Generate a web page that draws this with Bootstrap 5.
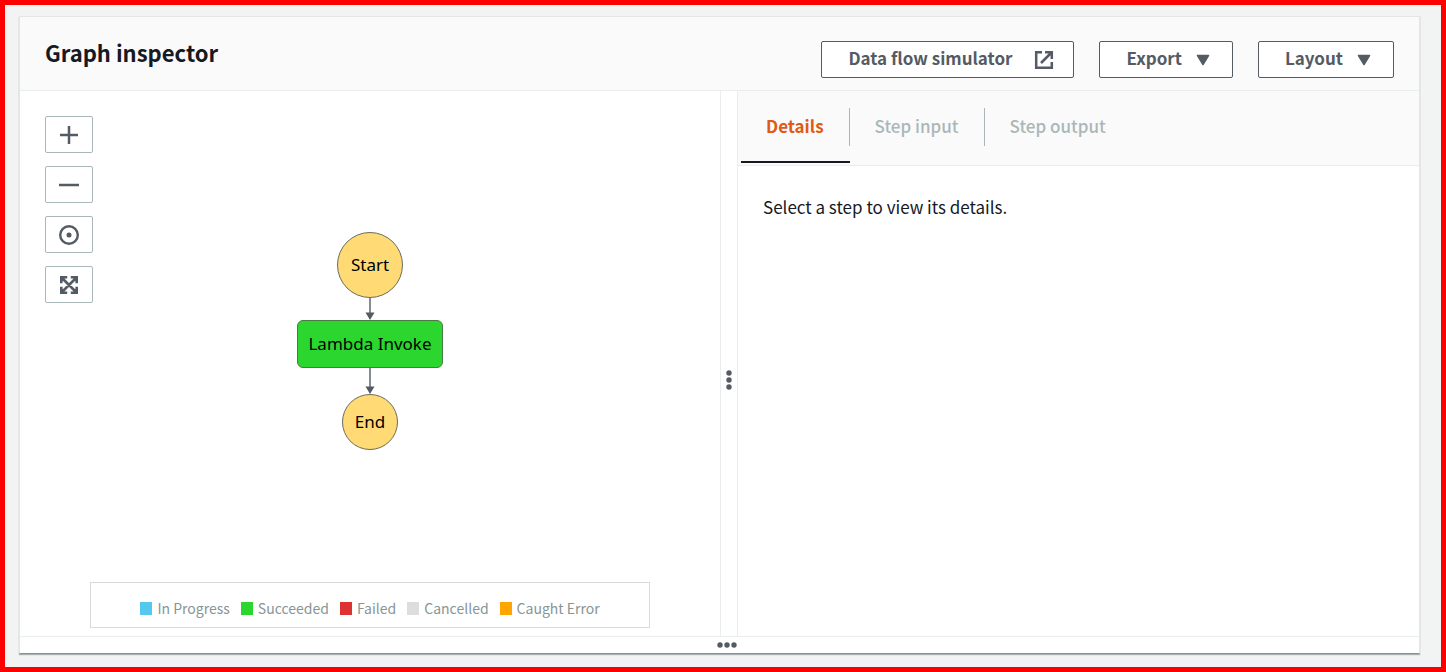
<!DOCTYPE html>
<html lang="en">
<head>
<meta charset="utf-8">
<meta name="viewport" content="width=device-width, initial-scale=1">
<title>Graph inspector</title>
<link href="https://cdn.jsdelivr.net/npm/bootstrap@5.3.0/dist/css/bootstrap.min.css" rel="stylesheet">
<style>
  body { font-family: "Noto Sans CJK JP", "Noto Sans", sans-serif; font-size: 17px; line-height: 24px; color: #16191f; background: #f2f3f3; }
  .page-frame { border: 5px solid #f00; padding: 11px 21px 13px 14px; }
  .inspector { background: #fff; border: 1px solid #e4e6e6; border-bottom: 1px solid #879196; box-shadow: 0 1px 1px rgba(0,28,36,.3); }
  .inspector-head { background: #fafafa; border-bottom: 1px solid #eaeded; padding: 24px 25px 12px; }
  .inspector-head h1 { font-size: 22px; line-height: 22px; font-weight: 700; }
  .head-actions { gap: 25px; }
  .btn-tool { --bs-btn-color: #545b64; --bs-btn-bg: #fff; --bs-btn-border-color: #545b64; --bs-btn-border-radius: 2px; --bs-btn-font-size: 17px; --bs-btn-font-weight: 700; --bs-btn-line-height: 22px; --bs-btn-hover-color: #16191f; --bs-btn-hover-bg: #fafafa; --bs-btn-hover-border-color: #16191f; height: 37px; padding: 0 22px 0 26px; display: flex; align-items: center; gap: 14px; }
  .btn-tool span { padding-bottom: 3px; }
  .btn-external { padding-right: 19px; gap: 22px; }
  .btn-zoom { --bs-btn-border-color: #aab7b8; width: 48px; padding: 0; justify-content: center; }
  .graph-pane { flex: 700 1 0; }
  .detail-pane { flex: 681 1 0; }
  .zoom-tools { top: 25px; left: 25px; gap: 13px; }
  .graph-area { padding-top: 8px; }
  .node { font-family: "Noto Sans", sans-serif; font-size: 17px; color: #000; border: 1px solid #6b6b5c; background: #ffda75; display: flex; align-items: center; justify-content: center; }
  .node-start { width: 66px; height: 66px; border-radius: 50%; }
  .node-end { width: 56px; height: 56px; border-radius: 50%; }
  .node-task { width: 146px; height: 48px; border-radius: 6px; background: #2bd62e; border-color: #4a7a44; }
  .legend-box { width: 80%; border: 1px solid #d9dbdb; margin-bottom: 8px; padding: 13px 0 7px; gap: 11px; font-size: 14px; color: #879596; }
  .legend-item { gap: 5px; }
  .swatch { width: 12px; height: 13px; }
  .s-progress { background: #53c9ed; } .s-ok { background: #2bd62e; } .s-fail { background: #de3232; } .s-cancel { background: #ddd; } .s-caught { background: orange; }
  .splitter { width: 18px; border: solid #eaeded; border-width: 0 1px; padding-top: 32px; }
  .grip-row { height: 17px; border-top: 1px solid #eaeded; padding-left: 15px; }
  .tab-strip { background: #fafafa; border-bottom: 1px solid #eaeded; padding: 17px 3px 2px; height: 75px; }
  .tab-strip .nav-link { border: 0; border-radius: 0; padding: 0 25px; height: 38px; line-height: 36px; color: #aab7b8; font-weight: 500; border-right: 1px solid #aab7b8; }
  .tab-strip .nav-item:last-child .nav-link { border-right: 0; }
  .tab-strip .nav-item { border-bottom: 2px solid transparent; }
  .tab-strip .nav-item.current { border-bottom-color: #16191f; }
  .tab-strip .nav-link.active { color: #df5b15; font-weight: 700; }
  .details-text { padding: 29px 25px; }
</style>
</head>
<body>
<div class="page-frame min-vh-100 d-flex">
  <main class="inspector flex-fill d-flex flex-column">
    <header class="inspector-head d-flex justify-content-between align-items-start">
      <h1 class="m-0">Graph inspector</h1>
      <div class="head-actions d-flex">
        <button type="button" class="btn btn-tool btn-external"><span>Data flow simulator</span>
          <svg width="20" height="20" viewBox="0 0 20 20" fill="none" stroke="currentColor" stroke-width="2.500" aria-hidden="true"><path d="M8 2.200H2.200v15.600h15.600V12M11 2.200h6.800V9M17.500 2.500 7 13"/></svg>
        </button>
        <button type="button" class="btn btn-tool"><span>Export</span>
          <svg width="14" height="12" viewBox="0 0 14 12" aria-hidden="true"><path d="M1.500 1.500h11L7 10.500z" fill="currentColor" stroke="currentColor" stroke-width="1.500" stroke-linejoin="round"/></svg>
        </button>
        <button type="button" class="btn btn-tool"><span>Layout</span>
          <svg width="14" height="12" viewBox="0 0 14 12" aria-hidden="true"><path d="M1.500 1.500h11L7 10.500z" fill="currentColor" stroke="currentColor" stroke-width="1.500" stroke-linejoin="round"/></svg>
        </button>
      </div>
    </header>
    <div class="d-flex flex-fill">
      <section class="graph-pane position-relative d-flex flex-column align-items-center" aria-label="Graph">
        <div class="zoom-tools position-absolute d-flex flex-column">
          <button type="button" class="btn btn-tool btn-zoom" aria-label="Zoom in"><svg width="20" height="20" viewBox="0 0 20 20" stroke="currentColor" stroke-width="2.500"><path d="M1 10h18M10 1v18"/></svg></button>
          <button type="button" class="btn btn-tool btn-zoom" aria-label="Zoom out"><svg width="20" height="20" viewBox="0 0 20 20" stroke="currentColor" stroke-width="2.500"><path d="M0 10h20"/></svg></button>
          <button type="button" class="btn btn-tool btn-zoom" aria-label="Center"><svg width="20" height="20" viewBox="0 0 20 20" fill="none" stroke="currentColor" stroke-width="2.400"><circle cx="10" cy="10" r="8.800"/><circle cx="10" cy="10" r="2.500" fill="currentColor" stroke="none"/></svg></button>
          <button type="button" class="btn btn-tool btn-zoom" aria-label="Fit to view"><svg width="20" height="20" viewBox="0 0 20 20" fill="none" stroke="currentColor" stroke-width="2.600"><path d="M2.300 8.200V2.300h5.900M11.800 2.300h5.900v5.900M17.700 11.800v5.900h-5.900M8.200 17.700H2.300v-5.900M2.500 2.500l15 15M17.500 2.500l-15 15"/></svg></button>
        </div>
        <div class="graph-area flex-fill d-flex flex-column align-items-center justify-content-center">
          <div class="node node-start">Start</div>
          <svg width="10" height="22" viewBox="0 0 10 22" aria-hidden="true"><path d="M5 0v15" stroke="#545b64" stroke-width="1.400"/><path d="M.5 14.500h9L5 22z" fill="#545b64"/></svg>
          <div class="node node-task">Lambda Invoke</div>
          <svg width="10" height="26" viewBox="0 0 10 26" aria-hidden="true"><path d="M5 0v19" stroke="#545b64" stroke-width="1.400"/><path d="M.5 18.500h9L5 26z" fill="#545b64"/></svg>
          <div class="node node-end">End</div>
        </div>
        <div class="legend-box d-flex justify-content-center">
          <span class="legend-item d-flex align-items-center"><span class="swatch s-progress"></span>In Progress</span>
          <span class="legend-item d-flex align-items-center"><span class="swatch s-ok"></span>Succeeded</span>
          <span class="legend-item d-flex align-items-center"><span class="swatch s-fail"></span>Failed</span>
          <span class="legend-item d-flex align-items-center"><span class="swatch s-cancel"></span>Cancelled</span>
          <span class="legend-item d-flex align-items-center"><span class="swatch s-caught"></span>Caught Error</span>
        </div>
      </section>
      <div class="splitter d-flex align-items-center justify-content-center" role="separator">
        <svg width="6" height="20" viewBox="0 0 6 20" fill="#545b64"><circle cx="3" cy="3" r="2.700"/><circle cx="3" cy="10" r="2.700"/><circle cx="3" cy="17" r="2.700"/></svg>
      </div>
      <section class="detail-pane">
        <ul class="nav tab-strip flex-nowrap align-items-stretch">
          <li class="nav-item current"><a class="nav-link active" href="#details">Details</a></li>
          <li class="nav-item"><a class="nav-link" href="#input">Step input</a></li>
          <li class="nav-item"><a class="nav-link" href="#output">Step output</a></li>
        </ul>
        <p class="details-text m-0" id="details">Select a step to view its details.</p>
      </section>
    </div>
    <div class="grip-row d-flex align-items-center justify-content-center" role="separator">
      <svg width="20" height="6" viewBox="0 0 20 6" fill="#545b64"><circle cx="3" cy="3" r="2.700"/><circle cx="10" cy="3" r="2.700"/><circle cx="17" cy="3" r="2.700"/></svg>
    </div>
  </main>
</div>
<script src="https://cdn.jsdelivr.net/npm/bootstrap@5.3.0/dist/js/bootstrap.bundle.min.js"></script>
</body>
</html>
